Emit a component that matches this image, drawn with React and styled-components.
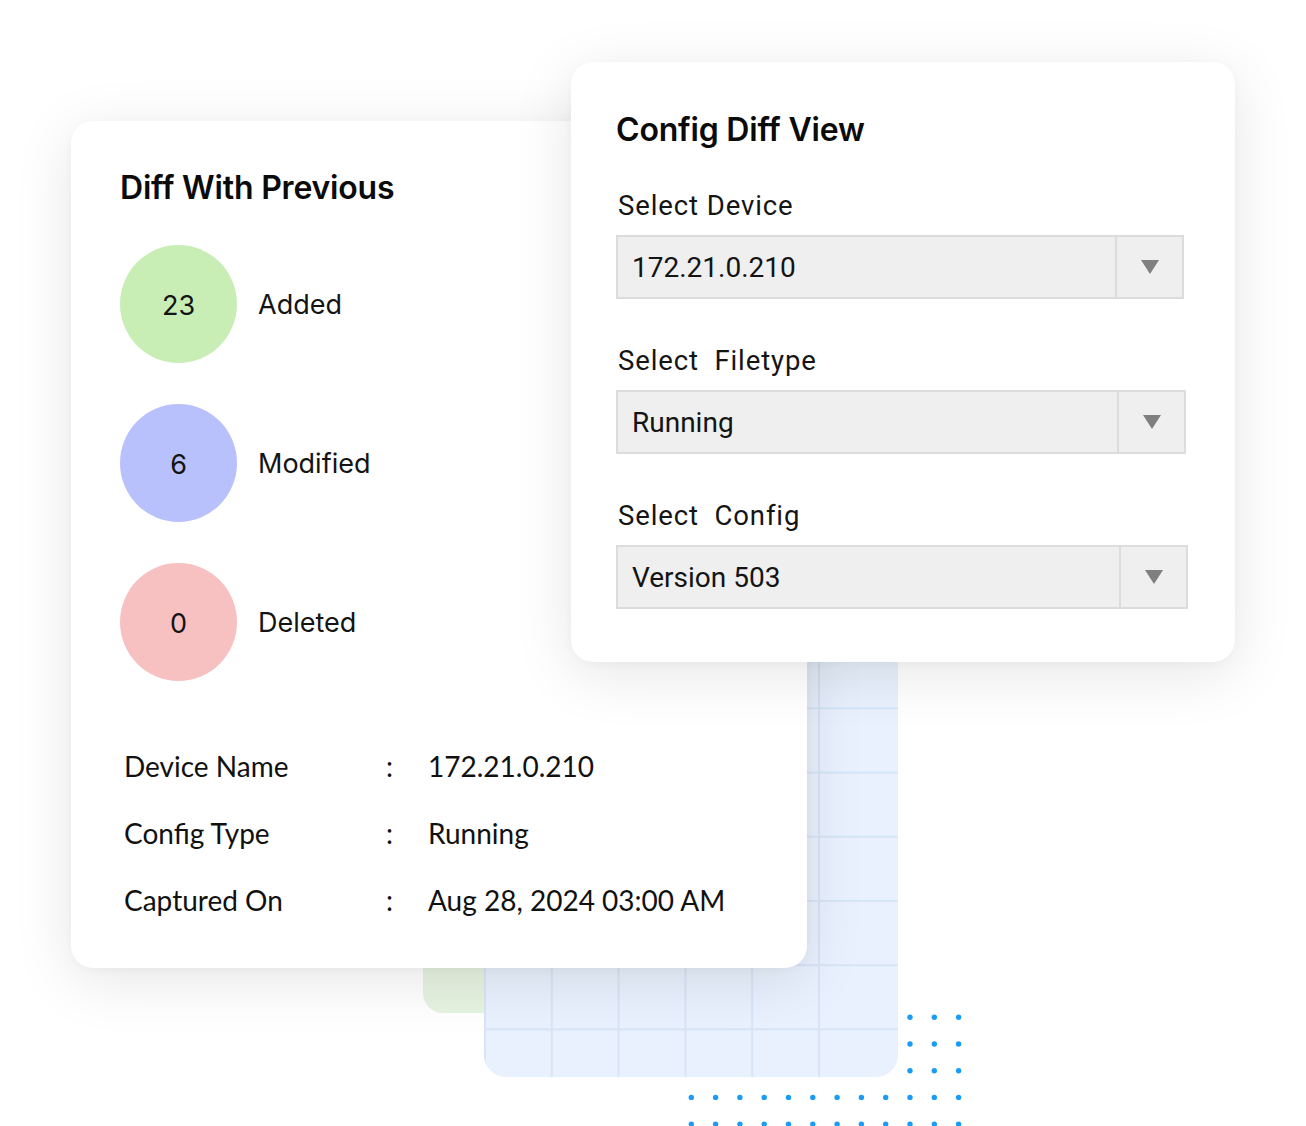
import React from "react";
import styled, { createGlobalStyle } from "styled-components";

const GlobalStyle = createGlobalStyle`
  html, body {
    margin: 0;
    padding: 0;
    background: #ffffff;
  }
  * {
    box-sizing: border-box;
  }
`;

const Canvas = styled.div`
  position: relative;
  width: 1306px;
  height: 1126px;
  overflow: hidden;
  background: #ffffff;
  font-family: "Lato", "Noto Sans", sans-serif;
  color: #111;
`;

/* decorative panels behind the cards */
const GreenPanel = styled.div`
  position: absolute;
  left: 423px;
  top: 700px;
  width: 200px;
  height: 313px;
  border-radius: 20px;
  background: #e7f3e1;
`;

const GridPanel = styled.div`
  position: absolute;
  left: 484px;
  top: 580px;
  width: 414px;
  height: 497px;
  border-radius: 22px;
  background-color: #e8f1fd;
  background-image: linear-gradient(
    to bottom,
    transparent calc(100% - 2px),
    #d8e5f6 calc(100% - 2px)
  );
  background-size: 100% 64.2px;
  background-position: 0 1px;
  overflow: hidden;
`;

const GridColumns = styled.div`
  width: 337px;
  height: 100%;
  background-image: linear-gradient(
    to right,
    transparent calc(100% - 2px),
    #d8e5f6 calc(100% - 2px)
  );
  background-size: 66.8px 100%;
  background-position: 2px 0;
`;

const Dots = styled.svg`
  position: absolute;
  left: 680px;
  top: 1005px;
`;

const Card = styled.section`
  position: absolute;
  background: #ffffff;
  border-radius: 22px;
  box-shadow: 0 12px 60px rgba(0, 0, 0, 0.1), 0 2px 10px rgba(0, 0, 0, 0.03);
`;

const DiffCard = styled(Card)`
  left: 71px;
  top: 121px;
  width: 736px;
  height: 847px;
  padding: 48px 0 0 49px;
`;

const ConfigCard = styled(Card)`
  left: 571px;
  top: 62px;
  width: 664px;
  height: 600px;
  padding: 49px 0 0 45px;
`;

const Title = styled.h2`
  margin: 0;
  font-family: "Inter", "Noto Sans", sans-serif;
  font-weight: 600;
  font-size: 32px;
  line-height: 38px;
  letter-spacing: -0.2px;
  color: #0b0b0b;
`;

const StatList = styled.div`
  display: flex;
  flex-direction: column;
  gap: 41px;
  margin-top: 38px;
`;

const StatRow = styled.div`
  display: flex;
  align-items: center;
  gap: 21px;
`;

const Bubble = styled.div`
  width: 117px;
  height: 118px;
  border-radius: 50%;
  background: ${(p) => p.$color};
  display: flex;
  align-items: center;
  justify-content: center;
  font-family: "Inter", "Noto Sans", sans-serif;
  font-size: 27px;
  color: #141414;
  padding-top: 3px;
`;

const StatLabel = styled.span`
  font-family: "Inter", "Noto Sans", sans-serif;
  font-size: 27px;
  color: #141414;
`;

const InfoGrid = styled.div`
  display: grid;
  grid-template-columns: 261px 43px auto;
  row-gap: 27px;
  margin-top: 65px;
  margin-left: 4px;
  font-family: "Lato", "Noto Sans", sans-serif;
  font-size: 28px;
  line-height: 40px;
  color: #111;
`;

const Colon = styled.span`
  padding-left: 1px;
`;

const FieldLabel = styled.div`
  font-family: "Roboto", "Noto Sans", sans-serif;
  font-size: 27.5px;
  letter-spacing: 0.9px;
  line-height: 32px;
  color: #151515;
  margin: ${(p) => (p.$first ? "41px" : "46px")} 0 13px 2px;
  white-space: pre;
`;

const Select = styled.div`
  display: flex;
  width: ${(p) => p.$width}px;
  height: 64px;
  background: #efefef;
  border: 2px solid #dcdcdc;
`;

const SelectValue = styled.div`
  flex: 1;
  display: flex;
  align-items: center;
  padding-left: 14px;
  font-family: "Roboto", "Noto Sans", sans-serif;
  font-size: 28px;
  color: #141414;
  border-right: 2px solid #dcdcdc;
`;

const Caret = styled.div`
  width: 65px;
  display: flex;
  align-items: center;
  justify-content: center;
`;

const stats = [
  { value: "23", label: "Added", color: "#c8eeb5" },
  { value: "6", label: "Modified", color: "#b9c1fd" },
  { value: "0", label: "Deleted", color: "#f7c1c1" },
];

const info = [
  ["Device Name", "172.21.0.210"],
  ["Config Type", "Running"],
  ["Captured On", "Aug 28, 2024 03:00 AM"],
];

const selects = [
  { label: "Select Device", value: "172.21.0.210", width: 568 },
  { label: "Select  Filetype", value: "Running", width: 570 },
  { label: "Select  Config", value: "Version 503", width: 572 },
];

const DotField = () => {
  const dots = [];
  const cols = 12;
  for (let r = 0; r < 5; r++) {
    for (let c = 0; c < cols; c++) {
      if (r < 3 && c < cols - 3) continue;
      dots.push(
        <circle
          key={`${r}-${c}`}
          cx={11.3 + c * 24.3}
          cy={12.3 + r * 26.7}
          r="2.7"
          fill="#1a9cf6"
        />
      );
    }
  }
  return (
    <Dots width="300" height="130" viewBox="0 0 300 130">
      {dots}
    </Dots>
  );
};

const CaretIcon = () => (
  <svg width="18" height="14" viewBox="0 0 18 14">
    <path d="M0 0 H18 L9 14 Z" fill="#7f7f7f" />
  </svg>
);

export default function App() {
  return (
    <>
      <GlobalStyle />
      <Canvas>
        <GreenPanel />
        <GridPanel>
          <GridColumns />
        </GridPanel>
        <DotField />

        <DiffCard>
          <Title>Diff With Previous</Title>
          <StatList>
            {stats.map((s) => (
              <StatRow key={s.label}>
                <Bubble $color={s.color}>{s.value}</Bubble>
                <StatLabel>{s.label}</StatLabel>
              </StatRow>
            ))}
          </StatList>
          <InfoGrid>
            {info.map(([k, v]) => (
              <React.Fragment key={k}>
                <span>{k}</span>
                <Colon>:</Colon>
                <span>{v}</span>
              </React.Fragment>
            ))}
          </InfoGrid>
        </DiffCard>

        <ConfigCard>
          <Title>Config Diff View</Title>
          {selects.map((s, i) => (
            <React.Fragment key={s.label}>
              <FieldLabel $first={i === 0}>{s.label}</FieldLabel>
              <Select $width={s.width}>
                <SelectValue>{s.value}</SelectValue>
                <Caret>
                  <CaretIcon />
                </Caret>
              </Select>
            </React.Fragment>
          ))}
        </ConfigCard>
      </Canvas>
    </>
  );
}
